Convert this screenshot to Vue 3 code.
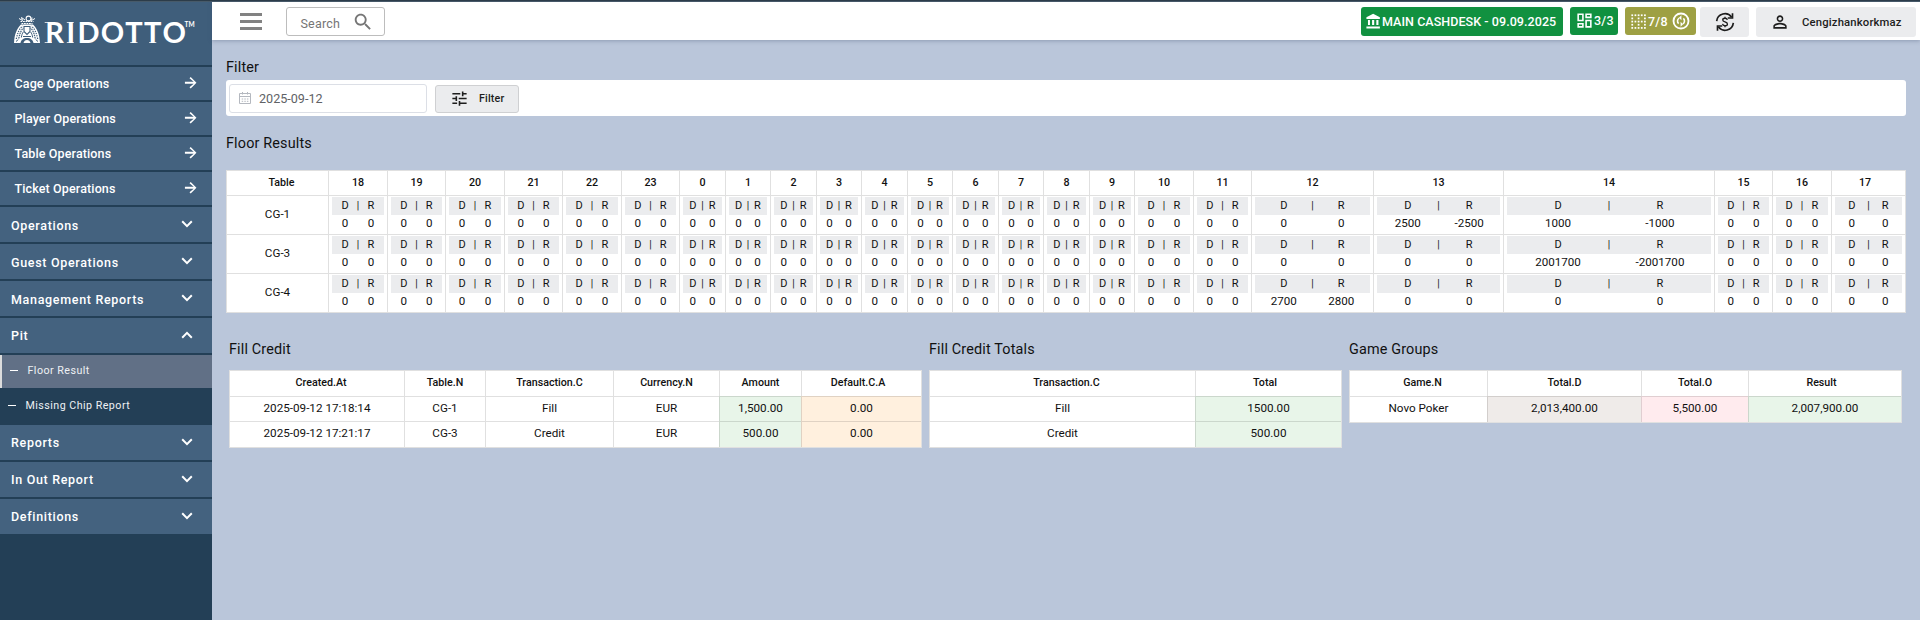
<script setup>
const links = ['Cage Operations', 'Player Operations', 'Table Operations', 'Ticket Operations']
const groupsTop = ['Operations', 'Guest Operations', 'Management Reports']
const groupsBottom = ['Reports', 'In Out Report', 'Definitions']

const hours = [18, 19, 20, 21, 22, 23, 0, 1, 2, 3, 4, 5, 6, 7, 8, 9, 10, 11, 12, 13, 14, 15, 16, 17]
const floor = [
  { name: 'CG-1', values: { 13: ['2500', '-2500'], 14: ['1000', '-1000'] } },
  { name: 'CG-3', values: { 14: ['2001700', '-2001700'] } },
  { name: 'CG-4', values: { 12: ['2700', '2800'] } }
]
const cell = (row, hour) => row.values[hour] || ['0', '0']

const panels = [
  {
    title: 'Fill Credit',
    kind: 'credit',
    heads: ['Created.At', 'Table.N', 'Transaction.C', 'Currency.N', 'Amount', 'Default.C.A'],
    tones: ['', '', '', '', 'green', 'orange'],
    rows: [
      ['2025-09-12 17:18:14', 'CG-1', 'Fill', 'EUR', '1,500.00', '0.00'],
      ['2025-09-12 17:21:17', 'CG-3', 'Credit', 'EUR', '500.00', '0.00']
    ]
  },
  {
    title: 'Fill Credit Totals',
    kind: 'totals',
    heads: ['Transaction.C', 'Total'],
    tones: ['', 'green'],
    rows: [['Fill', '1500.00'], ['Credit', '500.00']]
  },
  {
    title: 'Game Groups',
    kind: 'games',
    heads: ['Game.N', 'Total.D', 'Total.O', 'Result'],
    tones: ['', 'brown', 'red', 'green'],
    rows: [['Novo Poker', '2,013,400.00', '5,500.00', '2,007,900.00']]
  }
]

const dots = []
for (let y = 0; y < 5; y++) {
  for (let x = 0; x < 5; x++) {
    if (x % 2 === 0 || y % 2 === 0) dots.push([3 + x * 4, 3 + y * 4])
  }
}
</script>

<template>
  <div class="page">
    <div class="topline"></div>
    <div class="shell">
      <aside class="side">
        <div class="logo">
          <svg width="200" height="40" viewBox="0 0 200 40">
            <path fill="#fff" d="M14 33C14.300 24.500 17 18 21 14.500H33C37 18 39.700 24.500 40 33H33.500C33 30 30.500 28 27 28S21 30 20.500 33Z" />
            <g fill="none" stroke="#3f5e7b">
              <path d="M16.300 29C17.500 23 19.500 18.500 22.500 16M37.700 29C36.500 23 34.500 18.500 31.500 16" stroke-width="1.200" stroke-dasharray="1.300 1.100" />
              <path d="M18.800 28.500C19.700 23.500 21.300 20 23.300 18M35.200 28.500C34.300 23.500 32.700 20 30.700 18" stroke-width="1.200" stroke-dasharray="1.400 .8" />
              <path d="M21.300 27.500C21.700 25 22.300 23.500 23.300 22M32.700 27.500C32.300 25 31.700 23.500 30.700 22" stroke-width="1" />
              <path d="M24 16.500H30V21.500L27 24.500L24 21.500Z" stroke-width="1.100" />
              <path d="M16 31.500L18.300 29.500M38 31.500L35.700 29.500M23 26.500H31" stroke-width="1" />
            </g>
            <path d="M23.500 33C24 31 25.200 30 27 30S30 31 30.500 33Z" fill="#fff" />
            <g fill="none" stroke="#fff">
              <path d="M20.500 11.500H33.500M21.500 13.500H32.500" stroke-width="1.100" stroke-dasharray="1.800 .7" />
              <path d="M19 8.500L22.500 10.500L21.500 7.500L25 10M35 8.500L31.500 10.500L32 7.500" stroke-width="1" />
              <circle cx="28.500" cy="8.500" r="2.400" stroke-width="1.100" />
            </g>
            <g fill="#fff">
              <text class="wordmark" y="32.700" x="45.200 66.400 77.400 100.800 125.200 144 162.500">RIDOTTO</text>
              <path d="M44.700 31.900H51.800V32.700H44.700ZM44.700 11.900H49V12.700H44.700ZM66.800 11.900H73.800V12.700H66.800ZM66.800 31.900H73.800V32.700H66.800ZM130.300 31.900H137.500V32.700H130.300ZM149.100 31.900H156.300V32.700H149.100Z" />
              <text class="tm" x="184.500" y="16.500">TM</text>
            </g>
          </svg>
        </div>
        <div v-for="l in links" :key="l" class="link">
          <span>{{ l }}</span>
          <svg width="17.500" height="17.500" viewBox="0 0 24 24" fill="#fff">
            <path d="M4,10.700V13.300H16L10.300,18.300L11.920,19.920L19.840,12L11.920,4.080L10.300,5.700L16,10.700H4Z" />
          </svg>
        </div>
        <div v-for="g in groupsTop" :key="g" class="group low">
          <span>{{ g }}</span>
          <svg width="12" height="8" viewBox="0 0 12 8"><path d="M1.200 1.300L6 6.100L10.800 1.300" /></svg>
        </div>
        <div class="group">
          <span>Pit</span>
          <svg width="12" height="8" viewBox="0 0 12 8"><path d="M1.200 6.700L6 1.900L10.800 6.700" /></svg>
        </div>
        <div class="sub active"><i></i><span>Floor Result</span></div>
        <div class="sub"><i></i><span>Missing Chip Report</span></div>
        <div v-for="g in groupsBottom" :key="g" class="group">
          <span>{{ g }}</span>
          <svg width="12" height="8" viewBox="0 0 12 8"><path d="M1.200 1.300L6 6.100L10.800 1.300" /></svg>
        </div>
      </aside>

      <div class="body">
        <header class="bar">
          <div class="burger"><i></i><i></i><i></i></div>
          <div class="search">
            <span>Search</span>
            <svg width="22" height="22" viewBox="0 0 24 24" fill="#757575">
              <path d="M15.500 14h-.79l-.28-.27C15.410 12.590 16 11.110 16 9.500 16 5.910 13.090 3 9.500 3S3 5.910 3 9.500 5.910 16 9.500 16c1.610 0 3.090-.59 4.230-1.570l.27.28v.79l5 4.990L20.490 19l-4.990-5zm-6 0C7.010 14 5 11.990 5 9.500S7.010 5 9.500 5 14 7.010 14 9.500 11.990 14 9.500 14z" />
            </svg>
          </div>
          <div class="spacer"></div>
          <div class="chip desk">
            <svg width="17" height="17" viewBox="0 0 24 24" fill="#fff">
              <path d="M7,10H4.200V17H7V10M13,10H10V17H13V10M21,19H2V22H21V19M19,10H16V17H19V10M11.500,1L2,6V8.500H21V6L11.500,1Z" />
            </svg>
            <span>MAIN CASHDESK - 09.09.2025</span>
          </div>
          <div class="chip count">
            <svg width="19" height="19" viewBox="0 0 24 24" fill="#fff">
              <path d="M19 5v2h-4V5h4M9 5v6H5V5h4m10 8v6h-4v-6h4M9 17v2H5v-2h4M21 3h-8v6h8V3zM11 3H3v10h8V3zm10 8h-8v10h8V11zm-10 4H3v6h8v-6z" />
            </svg>
            <span>3/3</span>
          </div>
          <div class="chip slots">
            <svg width="19" height="19" viewBox="0 0 24 24" fill="#fff">
              <rect v-for="(d, i) in dots" :key="i" :x="d[0]" :y="d[1]" width="2.200" height="2.200" />
            </svg>
            <span>7/8</span>
            <svg class="swap" width="20" height="20" viewBox="0 0 24 24">
              <circle cx="12" cy="12" r="9" fill="none" stroke="#fff" stroke-width="2.200" />
              <path d="M9.200 15.200A4.200 4.200 0 0 1 9.800 8.500M14.800 8.800A4.200 4.200 0 0 1 14.200 15.500" fill="none" stroke="#fff" stroke-width="1.900" />
              <path d="M12.500 5V11L9.500 8ZM11.500 19V13L14.500 16Z" fill="#fff" />
            </svg>
          </div>
          <div class="chip exchange">
            <svg width="20" height="20" viewBox="0 0 24 24" fill="none" stroke="#1d1d1d" stroke-width="2">
              <path d="M2 11A10 10 0 0 1 20 6.200M22 13A10 10 0 0 1 4 17.800" />
              <path d="M21 1.500V7.200H15.300M3 22.500V16.800H8.700" />
              <path d="M14.800 9.500C14.500 8 13.300 7.500 12 7.500C10.500 7.500 9.300 8.300 9.300 9.600C9.300 12.500 14.900 11.200 14.900 14.300C14.900 15.700 13.600 16.500 12.100 16.500C10.500 16.500 9.300 15.800 9 14.200M12 5.800V7.500M12 16.500V18.200" stroke-width="1.600" />
            </svg>
          </div>
          <div class="chip user">
            <svg width="20" height="20" viewBox="0 0 24 24" fill="#1d1d1d">
              <path d="M12 5.900c1.160 0 2.100.94 2.100 2.100s-.94 2.100-2.100 2.100S9.900 9.160 9.900 8s.94-2.100 2.100-2.100m0 9c2.970 0 6.100 1.460 6.100 2.100v1.100H5.900V17c0-.64 3.130-2.100 6.100-2.100M12 4C9.790 4 8 5.790 8 8s1.790 4 4 4 4-1.790 4-4-1.790-4-4-4zm0 9c-2.670 0-8 1.340-8 4v3h16v-3c0-2.660-5.330-4-8-4z" />
            </svg>
            <span>Cengizhankorkmaz</span>
          </div>
        </header>

        <main>
          <h2 class="title t-filter">Filter</h2>
          <div class="filter">
            <div class="date">
              <svg width="12" height="12" viewBox="0 0 12 12" fill="none" stroke="#b4b8bf" stroke-width="1">
                <path d="M.5 1.500H11.500V11.500H.5ZM.5 4.500H11.500M3.500 0V2.500M8.500 0V2.500" />
                <path d="M2.700 7H9.800M2.700 9.300H9.800" stroke-dasharray="1.500 1.100" />
              </svg>
              <span>2025-09-12</span>
            </div>
            <div class="apply">
              <svg width="19" height="19" viewBox="0 0 24 24" fill="#1d1d1d">
                <path d="M3 17v2h6v-2H3zM3 5v2h10V5H3zm10 16v-2h8v-2h-8v-2h-2v6h2zM7 9v2H3v2h4v2h2V9H7zm14 4v-2H11v2h10zm-6-4h2V7h4V5h-4V3h-2v6z" />
              </svg>
              <span>Filter</span>
            </div>
          </div>

          <h2 class="title t-floor">Floor Results</h2>
          <div class="grid floor">
            <div class="th first">Table</div>
            <div v-for="h in hours" :key="h" class="th" :class="{ last: h === 17 }">{{ h }}</div>
            <template v-for="row in floor" :key="row.name">
              <div class="td name">{{ row.name }}</div>
              <div v-for="h in hours" :key="h" class="slot">
                <div class="pair dr"><span>D</span><b>|</b><span>R</span></div>
                <div class="pair"><span v-for="(v, i) in cell(row, h)" :key="i">{{ v }}</span></div>
              </div>
            </template>
          </div>

          <div class="panels">
            <section v-for="p in panels" :key="p.title">
              <h2 class="title t-panel">{{ p.title }}</h2>
              <div class="grid" :class="p.kind">
                <div
                  v-for="(h, i) in p.heads"
                  :key="h"
                  class="th"
                  :class="{ first: i === 0, last: i === p.heads.length - 1 }"
                >{{ h }}</div>
                <template v-for="(r, n) in p.rows" :key="n">
                  <div v-for="(v, i) in r" :key="i" class="td" :class="p.tones[i]">{{ v }}</div>
                </template>
              </div>
            </section>
          </div>
        </main>
      </div>
    </div>
  </div>
</template>

<style>
body {
  margin: 0;
  overflow: hidden;
}
</style>

<style scoped>
.page {
  width: 1920px;
  height: 620px;
  overflow: hidden;
  background: #bac6da;
  color: #111;
  font-family: Roboto, "Liberation Sans", sans-serif;
  font-size: 11.7px;
}
.page * {
  box-sizing: border-box;
}
.topline {
  height: 2px;
  background: linear-gradient(#2c3c49 50%, #475a69 50%);
}
.shell {
  display: flex;
  height: 618px;
}
.side {
  width: 212px;
  flex: none;
  background: #233f56;
  color: #fff;
  font-weight: 500;
  font-size: 12.5px;
}
.logo {
  height: 63px;
  margin-bottom: 2px;
  padding-top: 8px;
  background: #3f5e7b;
}
.logo svg {
  display: block;
}
.wordmark {
  font: 700 29px Lato, sans-serif;
}
.tm {
  font: 700 6.5px Lato, sans-serif;
}
.link,
.group {
  display: flex;
  align-items: center;
  justify-content: space-between;
  margin-bottom: 2px;
  background: #44627f;
}
.link {
  height: 33px;
  padding: 0 13px 1px 14.5px;
  letter-spacing: 0.13px;
}
.group {
  height: 35px;
  padding: 0 19.5px 1px 11px;
  letter-spacing: 0.68px;
}
.low span {
  padding-top: 2px;
}
.group svg {
  fill: none;
  stroke: #fff;
  stroke-width: 2;
}
.sub {
  display: flex;
  align-items: center;
  height: 37px;
  padding: 0 0 3px 8px;
  font-size: 10.7px;
  font-weight: 400;
  letter-spacing: 0.46px;
  color: #eef1f4;
}
.sub i {
  width: 8px;
  height: 1px;
  margin-right: 9.5px;
  background: #fff;
}
.sub.active {
  height: 33px;
  border-left: 2px solid #dcdcdc;
  background: #617086;
}
.body {
  flex: 1;
}
.bar {
  display: flex;
  height: 38px;
  padding: 5px 4px 0 28px;
  background: #fff;
  box-shadow: 0 1px 4px rgba(60, 75, 105, 0.35);
}
.burger {
  display: flex;
  flex-direction: column;
  gap: 4px;
  width: 22px;
  margin: 6px 24px 0 0;
}
.burger i {
  height: 3px;
  background: #828282;
}
.search {
  display: flex;
  align-items: center;
  justify-content: space-between;
  width: 99px;
  height: 29px;
  padding: 0 10px 0 13.500px;
  border: 1px solid #bdbdbd;
  border-radius: 3px;
  font-size: 12.500px;
  letter-spacing: 0.200px;
  color: #757575;
}
.search span {
  padding-top: 3px;
}
.spacer {
  flex: 1;
}
.chip {
  display: flex;
  align-items: center;
  height: 28px;
  border-radius: 3px;
  color: #fff;
  font-size: 12.500px;
  font-weight: 500;
  letter-spacing: 0.200px;
}
.desk {
  width: 202px;
  height: 29px;
  margin-right: 7px;
  padding-left: 4px;
  background: #119140;
  white-space: nowrap;
  letter-spacing: 0.060px;
}
.count {
  width: 48px;
  margin-right: 7px;
  padding: 0 0 1px 5px;
  background: #119140;
}
.slots {
  width: 71px;
  margin-right: 4px;
  padding-left: 4px;
  background: #9ea043;
}
.swap {
  margin-left: 3px;
}
.exchange {
  justify-content: center;
  width: 49px;
  height: 30px;
  margin-right: 7px;
  background: #ebecee;
}
.user {
  width: 160px;
  height: 30px;
  padding-left: 14px;
  background: #ebecee;
  color: #1d1d1d;
  font-size: 11.300px;
  letter-spacing: 0.160px;
}
.user span {
  margin-left: 12px;
}
main {
  padding: 0 14px;
}
.title {
  margin: 0;
  font-size: 14.400px;
  font-weight: 400;
  line-height: 18px;
  letter-spacing: 0.160px;
}
.t-filter {
  padding: 19px 0 3px;
}
.filter {
  display: flex;
  gap: 8px;
  height: 36px;
  padding: 4px 3px;
  border-radius: 3px;
  background: #fff;
}
.date {
  display: flex;
  align-items: center;
  gap: 8px;
  width: 198px;
  height: 29px;
  padding: 0 0 1px 9px;
  border: 1px solid #dcdfe6;
  border-radius: 3px;
  color: #606266;
  font-size: 12.600px;
}
.apply {
  display: flex;
  align-items: center;
  width: 84px;
  height: 28px;
  margin-top: 1px;
  padding: 0 0 1px 14px;
  border: 1px solid #cfd0d2;
  border-radius: 3px;
  background: #ebecee;
  color: #1d1d1d;
  font-size: 10.700px;
  font-weight: 500;
  letter-spacing: 0.160px;
}
.apply span {
  margin-left: 10px;
}
.t-floor {
  padding: 19px 0 17px;
}
.grid {
  display: grid;
  width: max-content;
  border-right: 1px solid #e0e0e0;
  border-bottom: 1px solid #e0e0e0;
  background: #fff;
}
.grid > div {
  border-top: 1px solid rgba(0, 0, 0, 0.12);
  border-left: 1px solid rgba(0, 0, 0, 0.12);
}
.floor {
  grid-template-columns: 102px 59px 58px 59px 58px 59px 58px 46px 45px 46px 45px 46px 45px 46px 45px 46px 45px 59px 58px 122px 130px 211px 58px 59px 74px;
  grid-template-rows: 25px 39px 39px 39px;
}
.credit {
  grid-template-columns: 175px 81px 128px 106px 82px 120px;
  grid-template-rows: 26px 25px 26px;
}
.totals {
  grid-template-columns: 266px 146px;
  grid-template-rows: 26px 25px 26px;
}
.games {
  grid-template-columns: 138px 154px 107px 153px;
  grid-template-rows: 26px 26px;
}
.th,
.td {
  display: flex;
  align-items: center;
  justify-content: center;
  padding-bottom: 3px;
}
.floor .th {
  padding-bottom: 1px;
}
.th {
  font-size: 10.700px;
  font-weight: 500;
}
.first {
  padding-left: 8px;
}
.last {
  padding-right: 7px;
}
.slot {
  padding: 1px 3px 0;
  font-size: 11.600px;
}
.pair {
  display: flex;
  height: 18px;
  line-height: 17px;
}
.pair span {
  flex: 1 1 0;
  text-align: center;
}
.pair b {
  display: flex;
  justify-content: center;
  width: 0;
  font-weight: 400;
  font-size: 10px;
}
.dr {
  background: #ebecee;
  font-size: 11px;
}
.panels {
  display: flex;
  gap: 7px;
  padding: 28px 0 0 3px;
}
.t-panel {
  padding-bottom: 11px;
}
.green {
  background: #e8f5e9;
}
.orange {
  background: #fff0de;
}
.brown {
  background: #efebe9;
}
.red {
  background: #ffebee;
}
</style>
